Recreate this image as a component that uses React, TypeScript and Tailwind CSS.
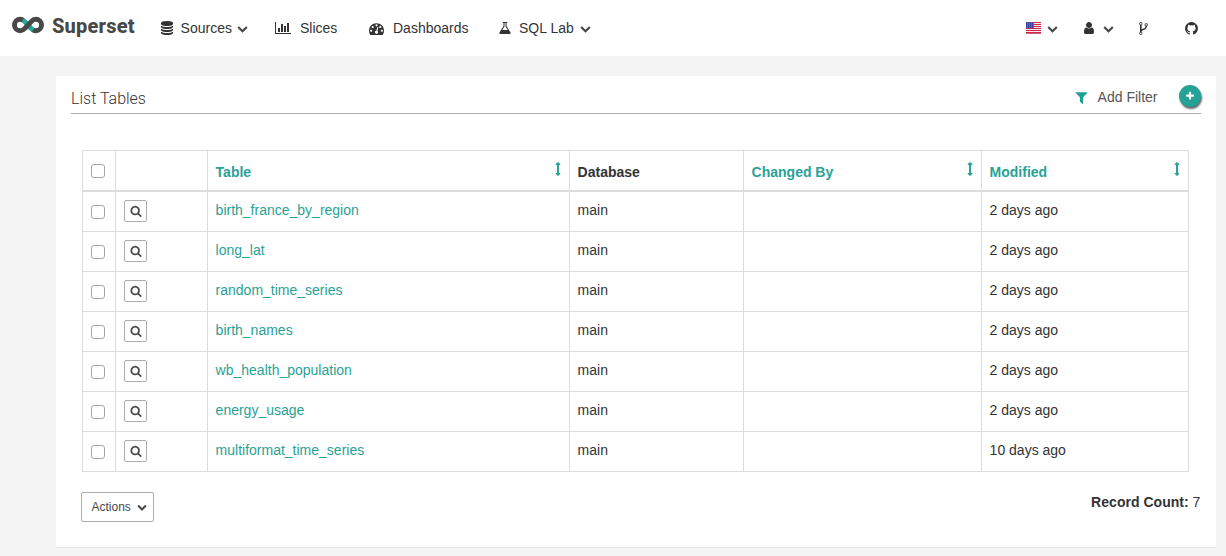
import type { ReactNode } from "react";

const ICONS = {
  database:
    "M768 768q237 0 443-43t325-127v170q0 69-103 128t-280 93.5-385 34.5-385-34.5-280-93.5-103-128v-170q119 84 325 127t443 43zm0 768q237 0 443-43t325-127v170q0 69-103 128t-280 93.5-385 34.5-385-34.5-280-93.5-103-128v-170q119 84 325 127t443 43zm0-384q237 0 443-43t325-127v170q0 69-103 128t-280 93.5-385 34.5-385-34.5-280-93.5-103-128v-170q119 84 325 127t443 43zm0-1152q208 0 385 34.5t280 93.5 103 128v128q0 69-103 128t-280 93.5-385 34.5-385-34.5-280-93.5-103-128v-128q0-69 103-128t280-93.5 385-34.5z",
  chart:
    "M640 896v512h-256v-512h256zm384-512v1024h-256v-1024h256zm1024 1152v128h-2048v-1536h128v1408h1920zm-640-896v768h-256v-768h256zm384-384v1152h-256v-1152h256z",
  gauge:
    "M384 1152q0-53-37.5-90.5t-90.5-37.5-90.5 37.5-37.5 90.5 37.5 90.5 90.5 37.5 90.5-37.5 37.5-90.5zm192-448q0-53-37.5-90.5t-90.5-37.5-90.5 37.5-37.5 90.5 37.5 90.5 90.5 37.5 90.5-37.5 37.5-90.5zm428 481l101-382q6-26-7.5-48.5t-38.5-29.5-48 6.5-30 39.5l-101 382q-60 5-107 43.5t-63 98.5q-20 77 20 146t117 89 146-20 89-117q16-60-6-117t-72-91zm660-33q0-53-37.5-90.5t-90.5-37.5-90.5 37.5-37.5 90.5 37.5 90.5 90.5 37.5 90.5-37.5 37.5-90.5zm-640-640q0-53-37.5-90.5t-90.5-37.5-90.5 37.5-37.5 90.5 37.5 90.5 90.5 37.5 90.5-37.5 37.5-90.5zm448 192q0-53-37.5-90.5t-90.5-37.5-90.5 37.5-37.5 90.5 37.5 90.5 90.5 37.5 90.5-37.5 37.5-90.5zm320 448q0 261-141 483-19 29-54 29h-1402q-35 0-54-29-141-221-141-483 0-182 71-348t191-286 286-191 348-71 348 71 286 191 191 286 71 348z",
  flask:
    "M1527 1448q56 89 21.5 152.5t-140.5 63.5h-1152q-106 0-140.5-63.5t21.5-152.5l503-793v-399h-64q-26 0-45-19t-19-45 19-45 45-19h512q26 0 45 19t19 45-19 45-45 19h-64v399zm-779-725l-272 429h712l-272-429-20-31v-436h-128v436z",
  user:
    "M1536 1399q0 109-62.5 187t-150.5 78h-854q-88 0-150.5-78t-62.5-187q0-85 8.5-160.5t31.5-152 58.5-131 94-89 134.5-34.5q131 128 313 128t313-128q76 0 134.5 34.5t94 89 58.5 131 31.5 152 8.5 160.5zm-256-887q0 159-112.5 271.5t-271.5 112.5-271.5-112.5-112.5-271.5 112.5-271.5 271.5-112.5 271.5 112.5 112.5 271.5z",
  fork:
    "M672 1472q0-40-28-68t-68-28-68 28-28 68 28 68 68 28 68-28 28-68zm0-1152q0-40-28-68t-68-28-68 28-28 68 28 68 68 28 68-28 28-68zm640 128q0-40-28-68t-68-28-68 28-28 68 28 68 68 28 68-28 28-68zm96 0q0 52-26 96.5t-70 69.5q-2 287-226 414-67 38-203 81-128 40-169.5 71t-41.5 100v26q44 25 70 69.5t26 96.5q0 80-56 136t-136 56-136-56-56-136q0-52 26-96.5t70-69.5v-820q-44-25-70-69.5t-26-96.5q0-80 56-136t136-56 136 56 56 136q0 52-26 96.5t-70 69.5v497q54-26 154-57 55-17 87.5-29.5t70.5-31 59-39.5 40.5-51 28-69.5 8.5-91.5q-44-25-70-69.5t-26-96.5q0-80 56-136t136-56 136 56 56 136z",
  github:
    "M896 128q209 0 385.5 103t279.5 279.5 103 385.5q0 251-146.5 451.5t-378.5 277.5q-27 5-40-7t-13-30q0-3 .5-76.5t.5-134.5q0-97-52-142 57-6 102.5-18t94-39 81-66.5 53-105 20.5-150.5q0-119-79-206 37-91-8-204-28-9-81 11t-92 44l-38 24q-93-26-192-26t-192 26q-16-11-42.5-27t-83.5-38.5-85-13.5q-45 113-8 204-79 87-79 206 0 85 20.5 150t52.5 105 80.5 67 94 39 102.5 18q-39 36-49 103-21 10-45 15t-57 5-65.5-21.5-55.5-62.5q-19-32-48.5-52t-49.5-24l-20-3q-21 0-29 4.5t-5 11.5 9 14 13 12l7 5q22 10 43.5 38t31.5 51l10 23q13 38 44 61.5t67 30 69.5 7 55.5-3.5l23-4q0 38 .5 88.5t.5 54.5q0 18-13 30t-40 7q-232-77-378.5-277.5t-146.5-451.5q0-209 103-385.5t279.5-279.5 385.5-103z",
  filter:
    "M1595 295q17 41-14 70l-493 493v742q0 42-39 59-13 5-25 5-27 0-45-19l-256-256q-19-19-19-45v-486l-493-493q-31-29-14-70 17-39 59-39h1280q42 0 59 39z",
  search:
    "M1216 832q0-185-131.5-316.5t-316.5-131.5-316.5 131.5-131.5 316.5 131.5 316.5 316.5 131.5 316.5-131.5 131.5-316.5zm512 832q0 52-38 90t-90 38q-54 0-90-38l-343-342q-179 124-399 124-143 0-273.5-55.5t-225-150-150-225-55.5-273.5 55.5-273.5 150-225 225-150 273.5-55.5 273.5 55.5 225 150 150 225 55.5 273.5q0 220-124 399l343 343q37 37 37 90z",
  plus:
    "M1600 736v192q0 40-28 68t-68 28h-416v416q0 40-28 68t-68 28h-192q-40 0-68-28t-28-68v-416h-416q-40 0-68-28t-28-68v-192q0-40 28-68t68-28h416v-416q0-40 28-68t68-28h192q40 0 68 28t28 68v416h416q40 0 68 28t28 68z",
  chevron:
    "M1683 808l-742 741q-19 19-45 19t-45-19l-742-741q-19-19-19-45.5t19-45.5l166-165q19-19 45-19t45 19l531 531 531-531q19-19 45-19t45 19l166 165q19 19 19 45.5t-19 45.5z",
  sort:
    "M1216 320q0 26-19 45t-45 19h-128v1024h128q26 0 45 19t19 45-19 45l-256 256q-19 19-45 19t-45-19l-256-256q-19-19-19-45t19-45 45-19h128v-1024h-128q-26 0-45-19t-19-45 19-45l256-256q19-19 45-19t45 19l256 256q19 19 19 45z",
};

function Icon({ name, box = "0 0 1792 1792", className }: { name: keyof typeof ICONS; box?: string; className: string }) {
  return (
    <svg viewBox={box} fill="currentColor" className={`block shrink-0 ${className}`} aria-hidden="true">
      <path d={ICONS[name]} />
    </svg>
  );
}

function Logo() {
  return (
    <svg viewBox="0 0 32 18" className="block h-[18px] w-8 shrink-0" fill="none" strokeWidth="4.9" aria-hidden="true">
      <path d="M10.6 3.8L13.4 6.2L18.6 12L21.4 14.4" stroke="#22a79b" />
      <path d="M10.9 4.1C10.1 3.6 9.200 3.300 8.200 3.300a5.750 5.750 0 0 0 0 11.500c2 0 3.400-.9 4.600-2.300L19.200 5.600C20.400 4.200 21.800 3.300 23.800 3.300a5.750 5.750 0 0 1 0 11.500c-1 0-1.900-.3-2.700-.8" stroke="#484848" />
    </svg>
  );
}

function Flag() {
  return (
    <svg viewBox="0 0 15 12" className="mt-px block h-3 w-[15px]" aria-hidden="true">
      <rect width="15" height="12" fill="#fff" />
      {[0, 2, 4, 6, 8, 10].map((y) => (
        <rect key={y} y={y} width="15" height="1.1" fill="#cf2645" />
      ))}
      <rect y="11.3" width="15" height=".7" fill="#b92b45" />
      <rect width="8" height="6.2" fill="#3c45a0" />
      {[1, 3, 5].map((y) =>
        [1, 3, 5, 7].map((x) => <rect key={`${x}-${y}`} x={x} y={y - 0.3} width=".7" height=".7" fill="#c9cdf0" />)
      )}
    </svg>
  );
}

function Checkbox() {
  return <span className="ml-2 block size-[14px] rounded-[3px] border border-[#a6a6a6] bg-white" role="checkbox" aria-checked="false" />;
}

function Th({ width, sortable, children }: { width: string; sortable?: boolean; children?: ReactNode }) {
  return (
    <th className={`h-[41px] border-r border-b-2 border-[#dcdcdc] p-0 text-left align-top font-bold ${width} ${sortable ? "text-[#29a295]" : ""}`}>
      <div className="flex justify-between pr-[4.5px] pl-[7.6px]">
        <span className="mt-[11px]">{children}</span>
        {sortable && <Icon name="sort" className="mt-[11px] size-[14px]" />}
      </div>
    </th>
  );
}

const CELL = "h-10 border-r border-b border-[#dcdcdc] p-0 align-top";
const TEXT_CELL = "h-10 border-r border-b border-[#dcdcdc] p-0 pt-2 pl-[7.6px] align-top";

const rows = [
  ["birth_france_by_region", "2 days ago"],
  ["long_lat", "2 days ago"],
  ["random_time_series", "2 days ago"],
  ["birth_names", "2 days ago"],
  ["wb_health_population", "2 days ago"],
  ["energy_usage", "2 days ago"],
  ["multiformat_time_series", "10 days ago"],
];

export default function App() {
  return (
    <div className="h-[556px] overflow-hidden bg-[#f4f4f4] font-['Liberation_Sans',Arial,sans-serif] text-sm leading-5 text-[#333]">
      <nav className="flex h-14 items-start bg-white">
        <a className="mt-4 ml-3 flex w-[148px]">
          <Logo />
          <span className="mt-[-2px] ml-2 font-['Roboto',sans-serif] text-[20px] leading-6 font-extrabold tracking-[0.2px] text-[#484848]">Superset</span>
        </a>
        <a className="mt-[18px] flex w-[115px]">
          <Icon name="database" box="0 0 1536 1792" className="mt-[3px] h-[14px] w-[14px]" />
          <span className="ml-[6.600px]">Sources</span>
          <Icon name="chevron" className="mt-[5px] ml-[5.400px] size-[11px] text-[#484848]" />
        </a>
        <a className="mt-[18px] flex w-[94px]">
          <Icon name="chart" box="0 0 2048 1792" className="mt-[3px] h-[14px] w-4" />
          <span className="ml-[9px]">Slices</span>
        </a>
        <a className="mt-[18px] flex w-[129px]">
          <Icon name="gauge" className="mt-[3px] size-[15px]" />
          <span className="ml-[9px]">Dashboards</span>
        </a>
        <a className="mt-[18px] flex">
          <Icon name="flask" box="0 0 1664 1792" className="mt-[3px] h-[14px] w-[14px]" />
          <span className="ml-[7px]">SQL Lab</span>
          <Icon name="chevron" className="mt-[5px] ml-[6px] size-[11px] text-[#484848]" />
        </a>
        <div className="mt-[21px] mr-[27px] ml-auto flex">
          <Flag />
          <Icon name="chevron" className="mt-[2px] ml-[6px] size-[11px] text-[#484848]" />
          <Icon name="user" className="ml-[24px] size-[14px]" />
          <Icon name="chevron" className="mt-[2px] ml-[7px] size-[11px] text-[#484848]" />
          <Icon name="fork" className="ml-[22px] size-[15px]" />
          <Icon name="github" className="ml-[33px] size-[15px]" />
        </div>
      </nav>

      <main className="mt-5 mr-[10px] ml-14 h-[471px] bg-white px-[15px] shadow-[0_1px_1px_rgba(0,0,0,0.04)]">
        <header className="flex h-[38px] border-b border-[#aeaeae]">
          <h1 className="mt-[13px] font-['Roboto',sans-serif] text-[16px] leading-5 font-light">List Tables</h1>
          <a className="mt-[11px] ml-auto flex text-[#555]">
            <Icon name="filter" className="mt-[3px] mr-[9px] size-[15px] text-[#22a094]" />
            Add Filter
          </a>
          <button className="mt-[9px] mr-[0.500px] ml-[21px] flex size-[22px] items-center justify-center rounded-full bg-[#25a295] text-white shadow-[1px_2px_2px_rgba(0,0,0,0.6)]">
            <Icon name="plus" className="size-[10px]" />
          </button>
        </header>

        <table className="mt-9 ml-[11px] w-[1107px] table-fixed border-separate border-spacing-0 border-t border-l border-[#dcdcdc]">
          <thead>
            <tr>
              <th className="h-[41px] w-[33px] border-r border-b-2 border-[#dcdcdc] p-0 align-top">
                <div className="pt-[13px]"><Checkbox /></div>
              </th>
              <Th width="w-[92px]" />
              <Th width="w-[362px]" sortable>Table</Th>
              <Th width="w-[174px]">Database</Th>
              <Th width="w-[238px]" sortable>Changed By</Th>
              <Th width="w-[207px]" sortable>Modified</Th>
            </tr>
          </thead>
          <tbody>
            {rows.map(([name, modified]) => (
              <tr key={name}>
                <td className={CELL}><div className="pt-[13px]"><Checkbox /></div></td>
                <td className={CELL}>
                  <button className="mt-2 ml-2 flex h-[22px] w-[23px] items-start rounded-[2px] border border-[#adadad] pt-1 pl-[5px] text-[#484848]">
                    <Icon name="search" className="size-3" />
                  </button>
                </td>
                <td className={`${TEXT_CELL} text-[#29a295]`}>{name}</td>
                <td className={TEXT_CELL}>main</td>
                <td className={CELL} />
                <td className={TEXT_CELL}>{modified}</td>
              </tr>
            ))}
          </tbody>
        </table>

        <footer className="mt-5 flex items-start justify-between pl-[10px]">
          <button className="flex h-[30px] w-[73px] items-center rounded-[2px] border border-[#adadad] pl-[9.500px] text-xs text-[#484848]">
            Actions
            <Icon name="chevron" className="mb-px ml-[6px] size-[10px]" />
          </button>
          <p className="mr-[0.600px]"><b className="tracking-[0.03px]">Record Count:</b> 7</p>
        </footer>
      </main>
    </div>
  );
}
